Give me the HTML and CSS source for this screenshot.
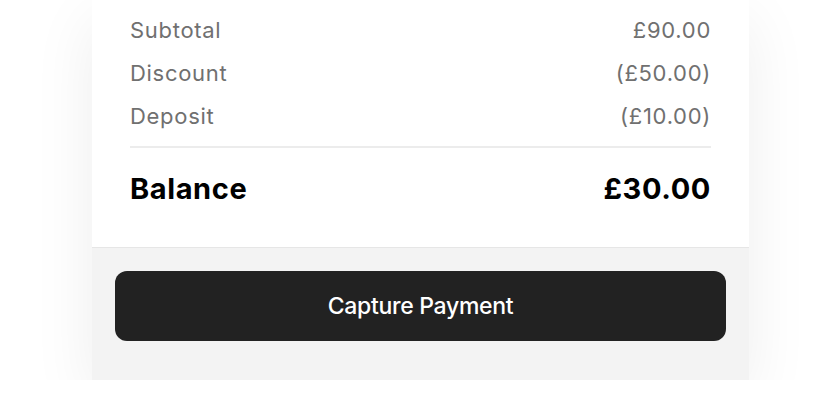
FILE: index.html
```html
<!DOCTYPE html>
<html lang="en">
<head>
    <meta charset="UTF-8">
    <meta name="viewport" content="width=device-width, initial-scale=1.0">
    <title>Payment Summary</title>
    <link rel="stylesheet" href="styles.css">
</head>
<body>
    <div class="page">
        <div class="card">
            <div class="summary">
                <div class="row">
                    <span>Subtotal</span>
                    <span>£90.00</span>
                </div>
                <div class="row">
                    <span>Discount</span>
                    <span>(£50.00)</span>
                </div>
                <div class="row">
                    <span>Deposit</span>
                    <span>(£10.00)</span>
                </div>
                <div class="row total">
                    <span>Balance</span>
                    <span>£30.00</span>
                </div>
            </div>
            <div class="card-footer">
                <button class="pay-btn">Capture Payment</button>
            </div>
        </div>
    </div>
</body>
</html>
```

FILE: styles.css
```css
* {
    margin: 0;
    padding: 0;
    box-sizing: border-box;
}

body {
    background: #ffffff;
    font-family: 'Inter', 'Liberation Sans', sans-serif;
    overflow: hidden;
}

.page {
    padding: 0 91px 0 92px;
}

.card {
    background: #f3f3f3;
    box-shadow: 0 20px 60px rgba(0, 0, 0, 0.07);
}

.summary {
    background: #ffffff;
    padding: 8px 38px 19px;
    border-bottom: 1px solid #e6e6e6;
}

.row {
    display: flex;
    justify-content: space-between;
    align-items: center;
    height: 43px;
    font-size: 22px;
    letter-spacing: 0.7px;
    color: #707070;
}

.row.total {
    height: 82px;
    margin-top: 9px;
    border-top: 2px solid #ececec;
    font-size: 29px;
    letter-spacing: 0.6px;
    font-weight: 700;
    color: #000000;
}

.card-footer {
    padding: 23px 23px 39px;
}

.pay-btn {
    display: block;
    width: 100%;
    height: 70px;
    border: none;
    border-radius: 12px;
    background: #222222;
    color: #ffffff;
    font-family: 'Inter', sans-serif;
    font-size: 23px;
    font-weight: 500;
    letter-spacing: -0.3px;
    cursor: pointer;
}
```
